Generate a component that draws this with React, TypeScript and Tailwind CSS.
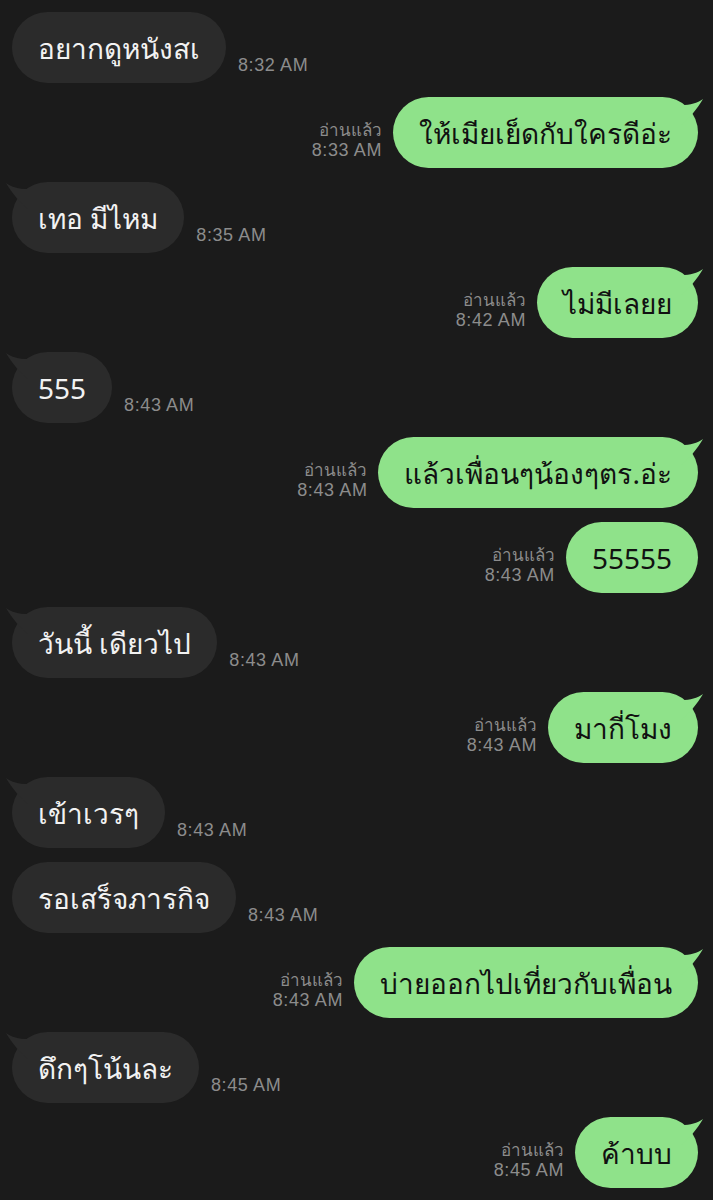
import React from 'react';

type Msg = {
  text: string;
  time: string;
  mine?: boolean;
  tail?: boolean;
};

const messages: Msg[] = [
  { text: 'อยากดูหนังสเ', time: '8:32 AM' },
  { text: 'ให้เมียเย็ดกับใครดีอ่ะ', time: '8:33 AM', mine: true, tail: true },
  { text: 'เทอ มีไหม', time: '8:35 AM', tail: true },
  { text: 'ไม่มีเลยย', time: '8:42 AM', mine: true, tail: true },
  { text: '555', time: '8:43 AM', tail: true },
  { text: 'แล้วเพื่อนๆน้องๆตร.อ่ะ', time: '8:43 AM', mine: true, tail: true },
  { text: '55555', time: '8:43 AM', mine: true },
  { text: 'วันนี้ เดียวไป', time: '8:43 AM', tail: true },
  { text: 'มากี่โมง', time: '8:43 AM', mine: true, tail: true },
  { text: 'เข้าเวรๆ', time: '8:43 AM', tail: true },
  { text: 'รอเสร็จภารกิจ', time: '8:43 AM' },
  { text: 'บ่ายออกไปเที่ยวกับเพื่อน', time: '8:43 AM', mine: true, tail: true },
  { text: 'ดึกๆโน้นละ', time: '8:45 AM', tail: true },
  { text: 'ค้าบบ', time: '8:45 AM', mine: true, tail: true },
];

const timeFont = { fontFamily: '"Liberation Sans", Arial, "Noto Sans", sans-serif' };

const Tail = ({ mine }: { mine?: boolean }) => (
  <svg
    width="22"
    height="26"
    viewBox="0 0 22 26"
    className={mine ? 'absolute -right-[5px] top-[2px]' : 'absolute -left-[6px] top-[1px]'}
    style={mine ? { transform: 'scaleX(-1)' } : undefined}
  >
    <path d="M0 0 C 6 4, 12 6, 22 6 L 22 26 C 14 20, 6 10, 0 0 Z" fill={mine ? '#8fe28a' : '#2b2b2b'} />
  </svg>
);

const Bubble = ({ m }: { m: Msg }) => (
  <div
    className={`relative h-[71px] rounded-full flex items-center px-[26px] text-[28px] leading-none ${
      m.mine ? 'bg-[#8fe28a] text-[#111111]' : 'bg-[#2b2b2b] text-[#f2f2f2]'
    }`}
  >
    {m.tail && <Tail mine={m.mine} />}
    <span className="relative">{m.text}</span>
  </div>
);

export default function App() {
  return (
    <div
      className="w-[713px] h-[1200px] overflow-hidden bg-[#1b1b1b]"
      style={{ fontFamily: '"Noto Sans", "Liberation Sans", sans-serif' }}
    >
      <div className="flex flex-col gap-[14px] pt-[12px] -mt-[85px]">
        <div className="pl-[12px] flex h-[73px] -mb-[2px]">
          <div className="h-[73px] w-[100px] rounded-full bg-[#2b2b2b]" />
        </div>
        {messages.map((m, i) =>
          m.mine ? (
            <div key={i} className="flex justify-end items-end pr-[15px]">
              <div className="flex flex-col items-end mr-[11px] mb-[7px] text-[#8c8c8c] text-[17px] leading-[21px]">
                <span>อ่านแล้ว</span>
                <span className="text-[18px] tracking-[0.6px]" style={timeFont}>{m.time}</span>
              </div>
              <Bubble m={m} />
            </div>
          ) : (
            <div key={i} className="flex items-end pl-[12px]">
              <Bubble m={m} />
              <span
                className="ml-[12px] mb-[7px] text-[#8c8c8c] text-[18px] leading-[21px] tracking-[0.6px]"
                style={timeFont}
              >
                {m.time}
              </span>
            </div>
          )
        )}
      </div>
    </div>
  );
}
